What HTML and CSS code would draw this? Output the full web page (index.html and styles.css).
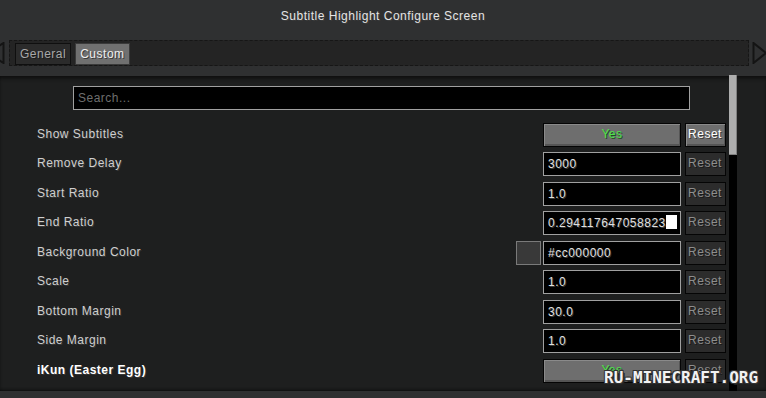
FILE: index.html
```html
<!DOCTYPE html>
<html lang="en">
<head>
  <meta charset="UTF-8">
  <meta name="viewport" content="width=device-width, initial-scale=1.0">
  <title>Subtitle Highlight Configure Screen</title>
  <link rel="stylesheet" href="styles.css">
</head>
<body>
  <div class="screen">
    <div class="title">Subtitle Highlight Configure Screen</div>

    <!-- tab bar -->
    <div class="tabs-row">
      <svg class="arrow arrow-left" width="5" height="22" viewBox="0 0 5 22">
        <polygon points="3.5,1 3.5,21 -12,11" fill="none" stroke="#141414" stroke-width="2"/>
      </svg>
      <div class="tab-bar">
        <div class="tab">General</div>
        <div class="tab active">Custom</div>
      </div>
      <svg class="arrow arrow-right" width="14" height="22" viewBox="0 0 14 22">
        <polygon points="1.5,1 1.5,21 14,11" fill="none" stroke="#141414" stroke-width="2"/>
      </svg>
    </div>

    <!-- entry list -->
    <div class="list">
      <div class="entries">
        <div class="search">Search...</div>

        <div class="row">
          <span class="label">Show Subtitles</span>
          <div class="button toggle">Yes</div>
          <div class="button reset">Reset</div>
        </div>
        <div class="row">
          <span class="label">Remove Delay</span>
          <div class="field">3000</div>
          <div class="button reset disabled">Reset</div>
        </div>
        <div class="row">
          <span class="label">Start Ratio</span>
          <div class="field">1.0</div>
          <div class="button reset disabled">Reset</div>
        </div>
        <div class="row">
          <span class="label">End Ratio</span>
          <div class="field">0.294117647058823<span class="cursor"></span></div>
          <div class="button reset disabled">Reset</div>
        </div>
        <div class="row">
          <span class="label">Background Color</span>
          <div class="swatch"></div>
          <div class="field">#cc000000</div>
          <div class="button reset disabled">Reset</div>
        </div>
        <div class="row">
          <span class="label">Scale</span>
          <div class="field">1.0</div>
          <div class="button reset disabled">Reset</div>
        </div>
        <div class="row">
          <span class="label">Bottom Margin</span>
          <div class="field">30.0</div>
          <div class="button reset disabled">Reset</div>
        </div>
        <div class="row">
          <span class="label">Side Margin</span>
          <div class="field">1.0</div>
          <div class="button reset disabled">Reset</div>
        </div>
        <div class="row">
          <span class="label bold">iKun (Easter Egg)</span>
          <div class="button toggle">Yes</div>
          <div class="button reset disabled">Reset</div>
        </div>
      </div>

      <div class="scrollbar">
        <div class="thumb"></div>
      </div>
    </div>

    <div class="bottom"></div>
  </div>

  <div class="watermark">RU-MINECRAFT.ORG</div>
</body>
</html>
```

FILE: styles.css
```css
body {
  margin: 0;
  background-color: #2f3031;
  font-family: 'Liberation Sans', Arial, sans-serif;
  font-size: 12px;
  letter-spacing: 0.5px;
  color: #e0e0e0;
  overflow: hidden;
}
.screen {
  width: 766px;
  height: 398px;
  display: flex;
  flex-direction: column;
}
.title {
  height: 40px;
  line-height: 32px;
  text-align: center;
  color: #e4e4e4;
  text-shadow: 1px 1px 0 #3c3c3c;
}

/* tabs */
.tabs-row {
  height: 26px;
  display: flex;
  margin-bottom: 10px;
}
.arrow {
  margin-top: 2px;
  flex-shrink: 0;
}
.arrow-left {
  margin-right: 4px;
}
.arrow-right {
  margin-left: 3px;
}
.tab-bar {
  width: 740px;
  box-sizing: border-box;
  background-color: #242424;
  border: 1px dashed #161616;
  display: flex;
  gap: 4px;
  padding: 2px 5px;
}
.tab {
  height: 22px;
  box-sizing: border-box;
  padding: 0 4px;
  line-height: 21px;
  background-color: #2b2b2b;
  border: 1px solid #0f0f0f;
  color: #a8a8a8;
  text-shadow: 1px 1px 0 #1a1a1a;
}
.tab.active {
  background-color: #707070;
  border-color: #3a3a3a;
  color: #efefef;
  text-shadow: 1px 1px 0 #3a3a3a;
}

/* list */
.list {
  height: 315px;
  background-color: #1e1f1f;
  display: flex;
  box-shadow: inset 0 4px 4px -2px #0c0c0c, inset 0 -3px 3px -2px #0c0c0c;
}
.entries {
  width: 729px;
  padding-top: 10px;
  box-sizing: border-box;
}
.search {
  margin-left: 73px;
  width: 617px;
  height: 24px;
  box-sizing: border-box;
  background-color: #000;
  border: 1px solid #a0a0a0;
  color: #6e6e6e;
  padding-left: 4px;
  line-height: 22px;
  margin-bottom: 12.5px;
}
.row {
  height: 24px;
  margin-bottom: 5.5px;
  display: flex;
  align-items: center;
  padding-left: 37px;
  padding-right: 3.5px;
}
.label {
  flex: 1;
  color: #cfcfcf;
  text-shadow: 1px 1px 0 #383838;
  margin-top: -2px;
}
.label.bold {
  font-weight: bold;
  color: #ffffff;
}
.swatch {
  width: 25px;
  height: 24px;
  box-sizing: border-box;
  background-color: #393939;
  border: 1px solid #7a7a7a;
  margin-right: 2px;
}
.field {
  width: 138px;
  height: 24px;
  box-sizing: border-box;
  background-color: #000;
  border: 1px solid #a0a0a0;
  padding-left: 4px;
  line-height: 22px;
  white-space: nowrap;
  overflow: hidden;
  color: #e0e0e0;
  text-shadow: 1px 1px 0 #3a3a3a;
}
.cursor {
  display: inline-block;
  width: 11px;
  height: 14px;
  background-color: #fff;
  vertical-align: -2px;
}
.button {
  height: 24px;
  box-sizing: border-box;
  border: 1px solid #050505;
  background-color: #6e6e6e;
  box-shadow: inset 1px 1px 0 #8a8a8a, inset -1px -2px 0 #555;
  text-align: center;
  line-height: 21px;
  color: #ffffff;
  text-shadow: 1px 1px 0 #3a3a3a;
}
.toggle {
  width: 138px;
  color: #4fe04f;
  text-shadow: 1px 1px 0 #1e4f1e;
}
.reset {
  width: 41px;
  margin-left: 3.5px;
}
.reset.disabled {
  background-color: #2c2c2c;
  box-shadow: none;
  color: #8e8e8e;
  text-shadow: 1px 1px 0 #1a1a1a;
}

/* scrollbar */
.scrollbar {
  width: 8px;
  background-color: #000;
  margin-top: -1px;
}
.thumb {
  height: 80px;
  background-color: #aeaeae;
  box-shadow: inset -1px -1px 0 #808080;
}
.bottom {
  flex: 1;
  background-color: #2f3031;
}

.watermark {
  position: absolute;
  left: 604px;
  top: 368px;
  font-family: 'DejaVu Sans Mono', monospace;
  font-weight: bold;
  font-size: 16px;
  letter-spacing: 0;
  color: #f2f2f2;
  text-shadow: 1px 1px 0 #333, -1px -1px 0 #333, 1px -1px 0 #333, -1px 1px 0 #333, 2px 2px 0 #222;
}
```
